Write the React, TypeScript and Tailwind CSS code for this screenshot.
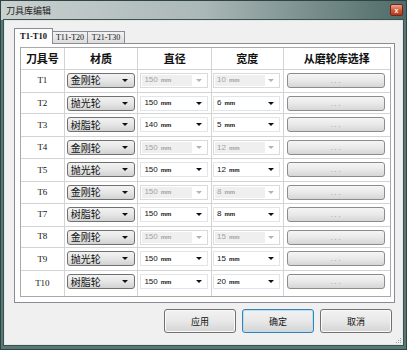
const rows = [
  { id: "T1", mat: "金刚轮", d: "150", w: "10", on: false, h: "h-[23px]" },
  { id: "T2", mat: "抛光轮", d: "150", w: "6", on: true, h: "h-[22px]" },
  { id: "T3", mat: "树脂轮", d: "140", w: "5", on: true, h: "h-[23px]" },
  { id: "T4", mat: "金刚轮", d: "150", w: "12", on: false, h: "h-[22px]" },
  { id: "T5", mat: "抛光轮", d: "150", w: "12", on: true, h: "h-[23px]" },
  { id: "T6", mat: "金刚轮", d: "150", w: "8", on: false, h: "h-[22px]" },
  { id: "T7", mat: "树脂轮", d: "150", w: "8", on: true, h: "h-[23px]" },
  { id: "T8", mat: "金刚轮", d: "150", w: "15", on: false, h: "h-[22px]" },
  { id: "T9", mat: "抛光轮", d: "150", w: "15", on: true, h: "h-[23px]" },
  { id: "T10", mat: "树脂轮", d: "150", w: "20", on: true, h: "h-[25px]" },
];

const cjk = { fontFamily: '"Noto Sans CJK SC", "Noto Sans", sans-serif' };
const serif = { fontFamily: '"Liberation Serif", "DejaVu Serif", serif' };
const sans = { fontFamily: '"Liberation Sans", Arial, sans-serif' };

const Arrow = ({ dim }: { dim?: boolean }) => (
  <div
    className={
      dim
        ? "w-0 h-0 border-x-[3px] border-x-transparent border-t-[3px] border-t-[#b4b4b4]"
        : "w-0 h-0 border-x-[3px] border-x-transparent border-t-[3px] border-t-[#111]"
    }
  />
);

const MatCombo = ({ text }: { text: string }) => (
  <div className="w-[68px] h-[15px] rounded-[3px] border border-[#707070] bg-gradient-to-b from-[#f3f3f3] via-[#e6e6e6] to-[#d2d2d2] flex items-center pl-[3px] pr-[6px] justify-between">
    <span className="text-[10px] leading-none text-[#111]" style={cjk}>
      {text}
    </span>
    <Arrow />
  </div>
);

const MmCombo = ({ v, on, w }: { v: string; on: boolean; w: string }) =>
  on ? (
    <div className={`${w} h-[15px] border border-[#e0e5ea] bg-white flex items-center pl-[3px] pr-[5px] justify-between`}>
      <span className="leading-none text-[#111] flex items-baseline gap-[3px]" style={sans}>
        <span className="text-[8px]">{v}</span>
        <span className="text-[6px] font-bold">mm</span>
      </span>
      <Arrow />
    </div>
  ) : (
    <div className={`${w} h-[15px] border border-[#dadada] bg-white flex items-center pr-[5px] justify-between`}>
      <div className="h-[11px] w-[50px] ml-[1px] bg-[#efefef] flex items-center pl-[2px]">
        <span className="leading-none text-[#a2a2a2] flex items-baseline gap-[3px]" style={sans}>
          <span className="text-[8px]">{v}</span>
          <span className="text-[6px] font-bold">mm</span>
        </span>
      </div>
      <Arrow dim />
    </div>
  );

const DotsButton = () => (
  <div className="w-[98px] h-[15px] rounded-[3px] border border-[#8c8c8c] bg-gradient-to-b from-[#f5f5f5] via-[#e9e9e9] to-[#d6d6d6] flex items-center justify-center">
    <span className="text-[7px] leading-none text-[#8a8a8a] tracking-[2px] pl-[2px]" style={sans}>
      ...
    </span>
  </div>
);

const DlgButton = ({ label, focus }: { label: string; focus?: boolean }) => (
  <div
    className={
      focus
        ? "w-[72px] h-[24px] rounded-[3px] border border-[#3c7fb1] bg-gradient-to-b from-[#f2f2f2] via-[#e8e8e8] to-[#d4d4d4] flex items-center justify-center shadow-[inset_0_0_0_1px_#b6e0f5]"
        : "w-[72px] h-[24px] rounded-[3px] border border-[#707070] bg-gradient-to-b from-[#f2f2f2] via-[#e8e8e8] to-[#d4d4d4] flex items-center justify-center shadow-[inset_0_0_0_1px_#fafafa]"
    }
  >
    <span className="text-[9px] leading-none text-[#111]" style={cjk}>
      {label}
    </span>
  </div>
);

const Header = () => (
  <div className="flex h-[22px] border-b border-[#d3d3d3] bg-white">
    {[
      ["刀具号", "w-[44px]"],
      ["材质", "w-[74px]"],
      ["直径", "w-[74px]"],
      ["宽度", "w-[72px]"],
      ["从磨轮库选择", "w-[107px]"],
    ].map(([t, w], i) => (
      <div
        key={i}
        className={`${w} ${i < 4 ? "border-r border-[#d3d3d3]" : ""} flex items-center justify-center`}
      >
        <span className="text-[11px] font-bold leading-none text-[#111]" style={cjk}>
          {t}
        </span>
      </div>
    ))}
  </div>
);

export default function App() {
  return (
    <div className="w-[407px] h-[350px] bg-[#5a7775] border border-[#2e4442] flex flex-col px-[3px] pb-[4px] overflow-hidden">
      {/* title bar */}
      <div className="relative h-[19px] -mx-[3px] bg-gradient-to-r from-[#c9d1d0] via-[#aab8b7] to-[#4f6b69] flex items-center pl-[5px]">
        <span className="text-[9px] leading-none text-[#1e2222]" style={cjk}>
          刀具库编辑
        </span>
        <div className="absolute top-[3px] right-[3px] w-[13px] h-[12px] rounded-[2px] border border-[#6b2a1c] bg-gradient-to-b from-[#eca58c] via-[#d4593a] to-[#b8361a] flex items-center justify-center">
          <span className="text-[7px] font-bold leading-none text-white" style={sans}>
            x
          </span>
        </div>
      </div>

      {/* client */}
      <div className="relative flex-1 bg-[#f0f0f0] border border-[#e1e7e6] outline outline-[#3a5351] flex flex-col pt-[7px] pl-[9px] pr-[7px]">
        <div className="relative z-10 flex items-end h-[16px] -mb-px">
          <div className="h-[16px] w-[39px] bg-[#fdfdfd] border border-b-0 border-[#898c95] flex items-center justify-center">
            <span className="text-[8.5px] font-bold leading-none text-[#111]" style={serif}>
              T1-T10
            </span>
          </div>
          <div className="h-[12px] mb-px w-[36px] -ml-px bg-gradient-to-b from-[#f2f2f2] to-[#dcdcdc] border border-b-0 border-[#898c95] flex items-center justify-center">
            <span className="text-[8px] leading-none text-[#111]" style={serif}>
              T11-T20
            </span>
          </div>
          <div className="h-[12px] mb-px w-[38px] -ml-px bg-gradient-to-b from-[#f2f2f2] to-[#dcdcdc] border border-b-0 border-[#898c95] flex items-center justify-center">
            <span className="text-[8px] leading-none text-[#111]" style={serif}>
              T21-T30
            </span>
          </div>
        </div>

        <div className="h-[260px] bg-[#fdfdfd] border border-[#898c95] pt-[3px] pl-[5px]">
          <div className="w-[371px] h-[250px] border border-[#a9a9a9] bg-white flex flex-col">
            <Header />
            {rows.map((r) => (
              <div key={r.id} className={`flex ${r.h} border-b border-[#d3d3d3] last:border-b-0`}>
                <div className="w-[44px] border-r border-[#d3d3d3] flex items-center justify-center">
                  <span className="text-[9px] leading-none text-[#111]" style={serif}>
                    {r.id}
                  </span>
                </div>
                <div className="w-[74px] border-r border-[#d3d3d3] pl-[2px] pt-[3px]">
                  <MatCombo text={r.mat} />
                </div>
                <div className="w-[74px] border-r border-[#d3d3d3] pl-[2px] pt-[3px]">
                  <MmCombo v={r.d} on={r.on} w="w-[68px]" />
                </div>
                <div className="w-[72px] border-r border-[#d3d3d3] pl-[1px] pt-[3px]">
                  <MmCombo v={r.w} on={r.on} w="w-[67px]" />
                </div>
                <div className="w-[107px] pl-[3px] pt-[3px]">
                  <DotsButton />
                </div>
              </div>
            ))}
          </div>
        </div>

        <div className="flex justify-end gap-[6px] mt-[6px] pr-[3px]">
          <DlgButton label="应用" />
          <DlgButton label="确定" focus />
          <DlgButton label="取消" />
        </div>

        {/* size grip */}
        <div className="absolute right-[1px] bottom-[1px] grid grid-cols-3 gap-[1px]">
          <span />
          <span />
          <span className="w-[1px] h-[1px] bg-[#a0a0a0]" />
          <span />
          <span className="w-[1px] h-[1px] bg-[#a0a0a0]" />
          <span className="w-[1px] h-[1px] bg-[#a0a0a0]" />
          <span className="w-[1px] h-[1px] bg-[#a0a0a0]" />
          <span className="w-[1px] h-[1px] bg-[#a0a0a0]" />
          <span className="w-[1px] h-[1px] bg-[#a0a0a0]" />
        </div>
      </div>
    </div>
  );
}
